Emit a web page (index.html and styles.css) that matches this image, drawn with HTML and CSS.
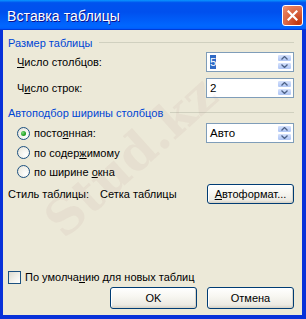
FILE: index.html
```html
<!DOCTYPE html>
<html lang="ru">
<head>
  <meta charset="UTF-8">
  <title>Вставка таблицы</title>
  <link rel="stylesheet" href="styles.css">
</head>
<body>
  <div class="window">
    <div class="titlebar">
      <span class="title">Вставка таблицы</span>
      <span class="close">
        <svg width="11" height="11" viewBox="0 0 11 11"><path d="M1.5 1.5 L9.5 9.5 M9.5 1.5 L1.5 9.5" stroke="#fff" stroke-width="2.2" stroke-linecap="square"/></svg>
      </span>
    </div>

    <div class="content">
      <!-- Table size -->
      <div class="caption"><span>Размер таблицы</span></div>
      <div class="row indent first">
        <span class="label"><u>Ч</u>исло столбцов:</span>
        <div class="spin">
          <span class="value"><span class="selected">5</span></span>
          <div class="spin-btns">
            <span class="spin-btn"><svg width="7" height="4" viewBox="0 0 7 4"><path d="M0.5 3.5 L3.5 0.5 L6.5 3.5" fill="none" stroke="#4d6185" stroke-width="1.3"/></svg></span>
            <span class="spin-btn"><svg width="7" height="4" viewBox="0 0 7 4"><path d="M0.5 0.5 L3.5 3.5 L6.5 0.5" fill="none" stroke="#4d6185" stroke-width="1.3"/></svg></span>
          </div>
        </div>
      </div>
      <div class="row indent">
        <span class="label">Ч<u>и</u>сло строк:</span>
        <div class="spin">
          <span class="value">2</span>
          <div class="spin-btns">
            <span class="spin-btn"><svg width="7" height="4" viewBox="0 0 7 4"><path d="M0.5 3.5 L3.5 0.5 L6.5 3.5" fill="none" stroke="#4d6185" stroke-width="1.3"/></svg></span>
            <span class="spin-btn"><svg width="7" height="4" viewBox="0 0 7 4"><path d="M0.5 0.5 L3.5 3.5 L6.5 0.5" fill="none" stroke="#4d6185" stroke-width="1.3"/></svg></span>
          </div>
        </div>
      </div>

      <!-- Autofit -->
      <div class="caption second"><span>Автоподбор ширины столбцов</span></div>
      <div class="row indent radio-row">
        <span class="option"><span class="radio checked"></span><span>посто<u>я</u>нная:</span></span>
        <div class="spin">
          <span class="value">Авто</span>
          <div class="spin-btns">
            <span class="spin-btn"><svg width="7" height="4" viewBox="0 0 7 4"><path d="M0.5 3.5 L3.5 0.5 L6.5 3.5" fill="none" stroke="#4d6185" stroke-width="1.3"/></svg></span>
            <span class="spin-btn"><svg width="7" height="4" viewBox="0 0 7 4"><path d="M0.5 0.5 L3.5 3.5 L6.5 0.5" fill="none" stroke="#4d6185" stroke-width="1.3"/></svg></span>
          </div>
        </div>
      </div>
      <div class="row indent plain">
        <span class="option"><span class="radio"></span><span>по содер<u>ж</u>имому</span></span>
      </div>
      <div class="row indent plain">
        <span class="option"><span class="radio"></span><span>по ширине <u>о</u>кна</span></span>
      </div>

      <!-- Style -->
      <div class="row style-row">
        <span class="style-label">Стиль таблицы:</span>
        <span class="style-name">Сетка таблицы</span>
        <button class="btn wide"><u>А</u>втоформат...</button>
      </div>

      <div class="spacer"></div>

      <div class="check-row">
        <span class="checkbox"></span><span>По умолча<u>н</u>ию для новых таблиц</span>
      </div>
      <div class="buttons">
        <button class="btn">OK</button>
        <button class="btn">Отмена</button>
      </div>
    </div>

    <div class="watermark">
      <span class="mark">Stud.kz</span>
    </div>
  </div>
</body>
</html>
```

FILE: styles.css
```css
/* XP style dialog */
body {
  margin: 0;
  font-family: "Liberation Sans", Arial, sans-serif;
  font-size: 11px;
  color: #000;
}
u {
  text-decoration: underline;
  text-underline-offset: 1px;
}
.window {
  position: relative;
  width: 306px;
  height: 319px;
  box-sizing: border-box;
  display: flex;
  flex-direction: column;
  background: #0831d9;
  overflow: hidden;
}
.titlebar {
  height: 30px;
  flex: none;
  display: flex;
  align-items: center;
  justify-content: space-between;
  padding: 0 3px 0 7px;
  background: linear-gradient(180deg, #0997ff 0%, #0053ee 9%, #0050ee 40%, #0066ff 85%, #0064fb 92%, #005bff 95%, #003dd7 97%, #003dd7 100%);
}
.title {
  color: #fff;
  font-size: 14px;
  letter-spacing: 0.1px;
  text-shadow: 1px 1px #0f1089;
  margin-top: 1px;
}
.close {
  width: 21px;
  height: 21px;
  box-sizing: border-box;
  border: 1px solid #fff;
  border-radius: 3px;
  display: flex;
  align-items: center;
  justify-content: center;
  background: radial-gradient(circle at 80% 90%, #c0360c 0%, #d45a36 40%, #e6805c 80%, #f0a080 100%);
  box-shadow: inset 0 0 1px #c44;
}
.content {
  flex: 1;
  margin: 0 4px 4px 3px;
  background: #ece9d8;
  padding: 6px 8px 6px 5px;
  display: flex;
  flex-direction: column;
}
.caption {
  display: flex;
  align-items: center;
  color: #0046d5;
  height: 13px;
}
.caption::after {
  content: "";
  flex: 1;
  height: 1px;
  background: #d0d0bf;
  margin-left: 7px;
}
.caption.second {
  margin-top: 8px;
}
.row {
  display: flex;
  align-items: center;
  justify-content: space-between;
  height: 20px;
}
.indent {
  padding-left: 9px;
}
.row.first {
  margin-top: 3px;
}
.row + .row {
  margin-top: 6px;
}
.radio-row {
  margin-top: 4px;
}
.row.plain {
  margin-top: 0 !important;
  height: 19px;
}
.spin {
  width: 88px;
  height: 20px;
  box-sizing: border-box;
  border: 1px solid #7f9db9;
  background: #fff;
  display: flex;
}
.value {
  flex: 1;
  padding-left: 3px;
  line-height: 18px;
  font-size: 11.5px;
}
.selected {
  background: #316ac5;
  color: #fff;
  padding: 1px 0;
}
.spin-btns {
  width: 15px;
  display: flex;
  flex-direction: column;
  padding: 1px 1px 1px 0;
}
.spin-btn {
  flex: 1;
  display: flex;
  align-items: center;
  justify-content: center;
  border: 1px solid #fff;
  border-radius: 2px;
  background: linear-gradient(180deg, #d6e2fc 0%, #bccff8 60%, #b0c6f4 100%);
}
.option {
  display: flex;
  align-items: center;
}
.radio {
  width: 13px;
  height: 13px;
  box-sizing: border-box;
  border: 1px solid #1c5180;
  border-radius: 50%;
  background: radial-gradient(circle at 70% 70%, #fff 0%, #f0efe8 60%, #dcdad0 100%);
  margin-right: 4px;
  display: inline-flex;
  align-items: center;
  justify-content: center;
}
.radio.checked::after {
  content: "";
  width: 5px;
  height: 5px;
  border-radius: 50%;
  background: radial-gradient(circle at 35% 35%, #7edd7e 0%, #21a121 60%, #1a7a1a 100%);
}
.style-row {
  margin-top: 3px !important;
  justify-content: flex-start;
}
.style-label {
  width: 92px;
}
.style-name {
  flex: 1;
}
.btn {
  font-family: inherit;
  font-size: 11px;
  color: #000;
  height: 20px;
  width: 87px;
  padding: 0;
  border: 1px solid #003c74;
  border-radius: 3px;
  background: linear-gradient(180deg, #fff 0%, #f8f7f2 40%, #eceae2 85%, #d6d0c5 100%);
  box-shadow: inset -1px -1px 0 #d9d5c9, inset 1px 1px 0 #fff;
}
.spacer {
  flex: 1;
}
.check-row {
  display: flex;
  align-items: center;
  height: 16px;
}
.checkbox {
  width: 13px;
  height: 13px;
  box-sizing: border-box;
  border: 1px solid #1c5180;
  background: linear-gradient(135deg, #dcdad0 0%, #f0efe8 50%, #fff 100%);
  margin-right: 4px;
}
.buttons {
  display: flex;
  justify-content: flex-end;
  gap: 10px;
  margin-top: 2px;
}
.btn:not(.wide) {
  height: 22px;
  width: 87px;
}
/* faint watermark over the dialog */
.watermark {
  position: absolute;
  inset: 0;
  pointer-events: none;
}
.mark {
  position: absolute;
  left: 72px;
  top: 190px;
  font-family: "DejaVu Serif", serif;
  font-weight: bold;
  font-size: 50px;
  color: rgba(170, 110, 110, 0.08);
  white-space: nowrap;
  transform-origin: left bottom;
  transform: rotate(-42deg);
}
```
